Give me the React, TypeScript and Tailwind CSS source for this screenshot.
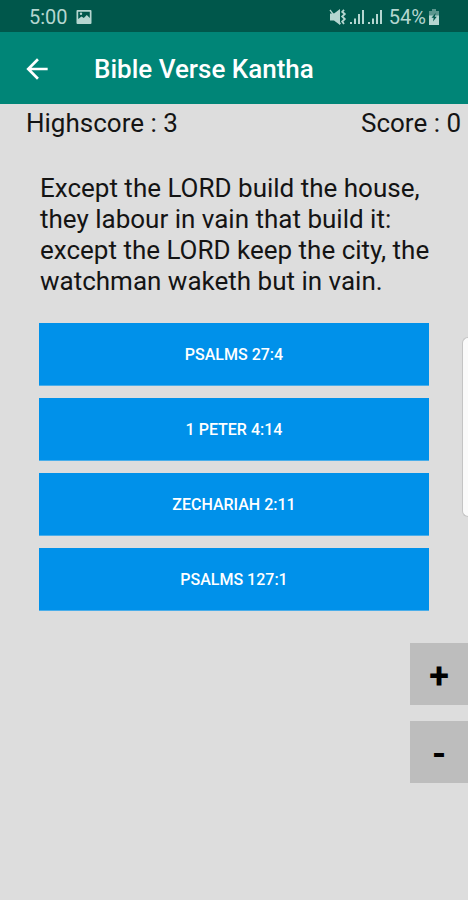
import React, { useState } from 'react';

interface AnswerButtonProps {
    label: string;
    onSelect: () => void;
}

const verse =
    'Except the LORD build the house, they labour in vain that build it: except the LORD keep the city, the watchman waketh but in vain.';

const answers = ['Psalms 27:4', '1 Peter 4:14', 'Zechariah 2:11', 'Psalms 127:1'];

const PictureIcon = () => (
    <svg viewBox="0 0 16 16" className="w-4 h-4" aria-hidden="true">
        <path
            fill="currentColor"
            fillRule="evenodd"
            d="M1.5 1h13a1 1 0 0 1 1 1v12a1 1 0 0 1-1 1h-13a1 1 0 0 1-1-1V2a1 1 0 0 1 1-1zM2.200 2.700v7.300l3.300-2.500 2.300 1.500 3-3 3 3V2.700z"
        />
        <circle cx="5" cy="4.800" r="1.200" fill="currentColor" />
    </svg>
);

const MuteVibrateIcon = () => (
    <svg viewBox="0 0 18 16" className="w-[18px] h-4" aria-hidden="true">
        <path fill="currentColor" d="M1 4.500h4l6-4.500v16l-6-4.500H1z" />
        <path stroke="currentColor" strokeWidth="1.300" d="M1 1l10.500 14" />
        <path
            fill="none"
            stroke="currentColor"
            strokeWidth="1.800"
            d="M15 .8l-1.800 2 2.600 2.200-2.600 2.500 2.600 2.500-2.600 2.500L15 15"
        />
    </svg>
);

const SignalIcon = () => (
    <svg viewBox="0 0 16 16" className="w-4 h-4" aria-hidden="true">
        <path fill="currentColor" d="M1 13h2v2H1zM5 9.500h2V15H5zM9 5h2v10H9zM13 1h2v14h-2z" />
    </svg>
);

const BatteryIcon = () => (
    <svg viewBox="0 0 12 18" className="w-3 h-[18px]" aria-hidden="true">
        <path fill="currentColor" opacity=".5" d="M4 1h4v2h3v5H1V3h3z" />
        <path fill="currentColor" d="M1 7.500h10V17H1z" />
        <path fill="#00574b" d="M7.800 5L3.500 9.800h2.200L5 13.500l3.800-4.700H6.700z" />
    </svg>
);

const BackIcon = () => (
    <svg viewBox="0 0 24 24" className="w-8 h-8" aria-hidden="true">
        <path fill="currentColor" d="M20 11H7.830l5.590-5.590L12 4l-8 8 8 8 1.410-1.410L7.830 13H20v-2z" />
    </svg>
);

const AnswerButton: React.FC<AnswerButtonProps> = ({ label, onSelect }) => (
    <button
        type="button"
        onClick={onSelect}
        className="h-[63px] w-full border-b border-[#4aaeea] bg-[#0091ea] pt-0.5 text-base font-medium uppercase text-white"
    >
        {label}
    </button>
);

const App: React.FC = () => {
    const [, setAnswer] = useState('');
    const [large, setLarge] = useState(false);

    return (
        <div className="relative flex min-h-screen flex-col bg-[#dddddd] font-['Roboto',sans-serif] text-[#141414]">
            <div className="flex h-8 items-center justify-between bg-[#00574b] pl-[29px] pr-7 pt-0.5 text-xl text-[#b5d6d0]">
                <div className="flex items-center gap-2">
                    <span>5:00</span>
                    <PictureIcon />
                </div>
                <div className="flex items-center gap-0.5">
                    <MuteVibrateIcon />
                    <SignalIcon />
                    <SignalIcon />
                    <span className="ml-1">54%</span>
                    <BatteryIcon />
                </div>
            </div>

            <header className="flex h-[72px] items-center gap-[41px] bg-[#008577] pl-[21px] pt-0.5 text-white">
                <button type="button" aria-label="Back">
                    <BackIcon />
                </button>
                <h1 className="text-[26px] font-medium">Bible Verse Kantha</h1>
            </header>

            <div className="flex justify-between px-[26px] pr-[7px] pt-1 text-[26px] leading-[31px]">
                <span>Highscore : 3</span>
                <span>Score : 0</span>
            </div>

            <main className="pt-[34px]">
                <p className={`pl-10 pr-8 ${large ? 'text-[30px] leading-9' : 'text-[26px] leading-[31px]'}`}>{verse}</p>
                <div className="mt-[26px] flex flex-col gap-3 px-[39px]">
                    {answers.map((item) => (
                        <AnswerButton key={item} label={item} onSelect={() => setAnswer(item)} />
                    ))}
                </div>
            </main>

            <div className="mt-8 flex flex-col items-end gap-4 text-4xl font-bold text-black">
                <button
                    type="button"
                    aria-label="Larger text"
                    onClick={() => setLarge(true)}
                    className="h-[62px] w-[58px] bg-[#bdbdbd] pt-1"
                >
                    +
                </button>
                <button
                    type="button"
                    aria-label="Smaller text"
                    onClick={() => setLarge(false)}
                    className="h-[62px] w-[58px] bg-[#bdbdbd] pt-1"
                >
                    -
                </button>
            </div>

            {/* edge panel handle */}
            <div className="absolute right-0 top-[337px] h-[180px] w-1.5 rounded-l-md border border-r-0 border-[#c4c4c4] bg-[#fafafa]" />
        </div>
    );
};

export default App;
